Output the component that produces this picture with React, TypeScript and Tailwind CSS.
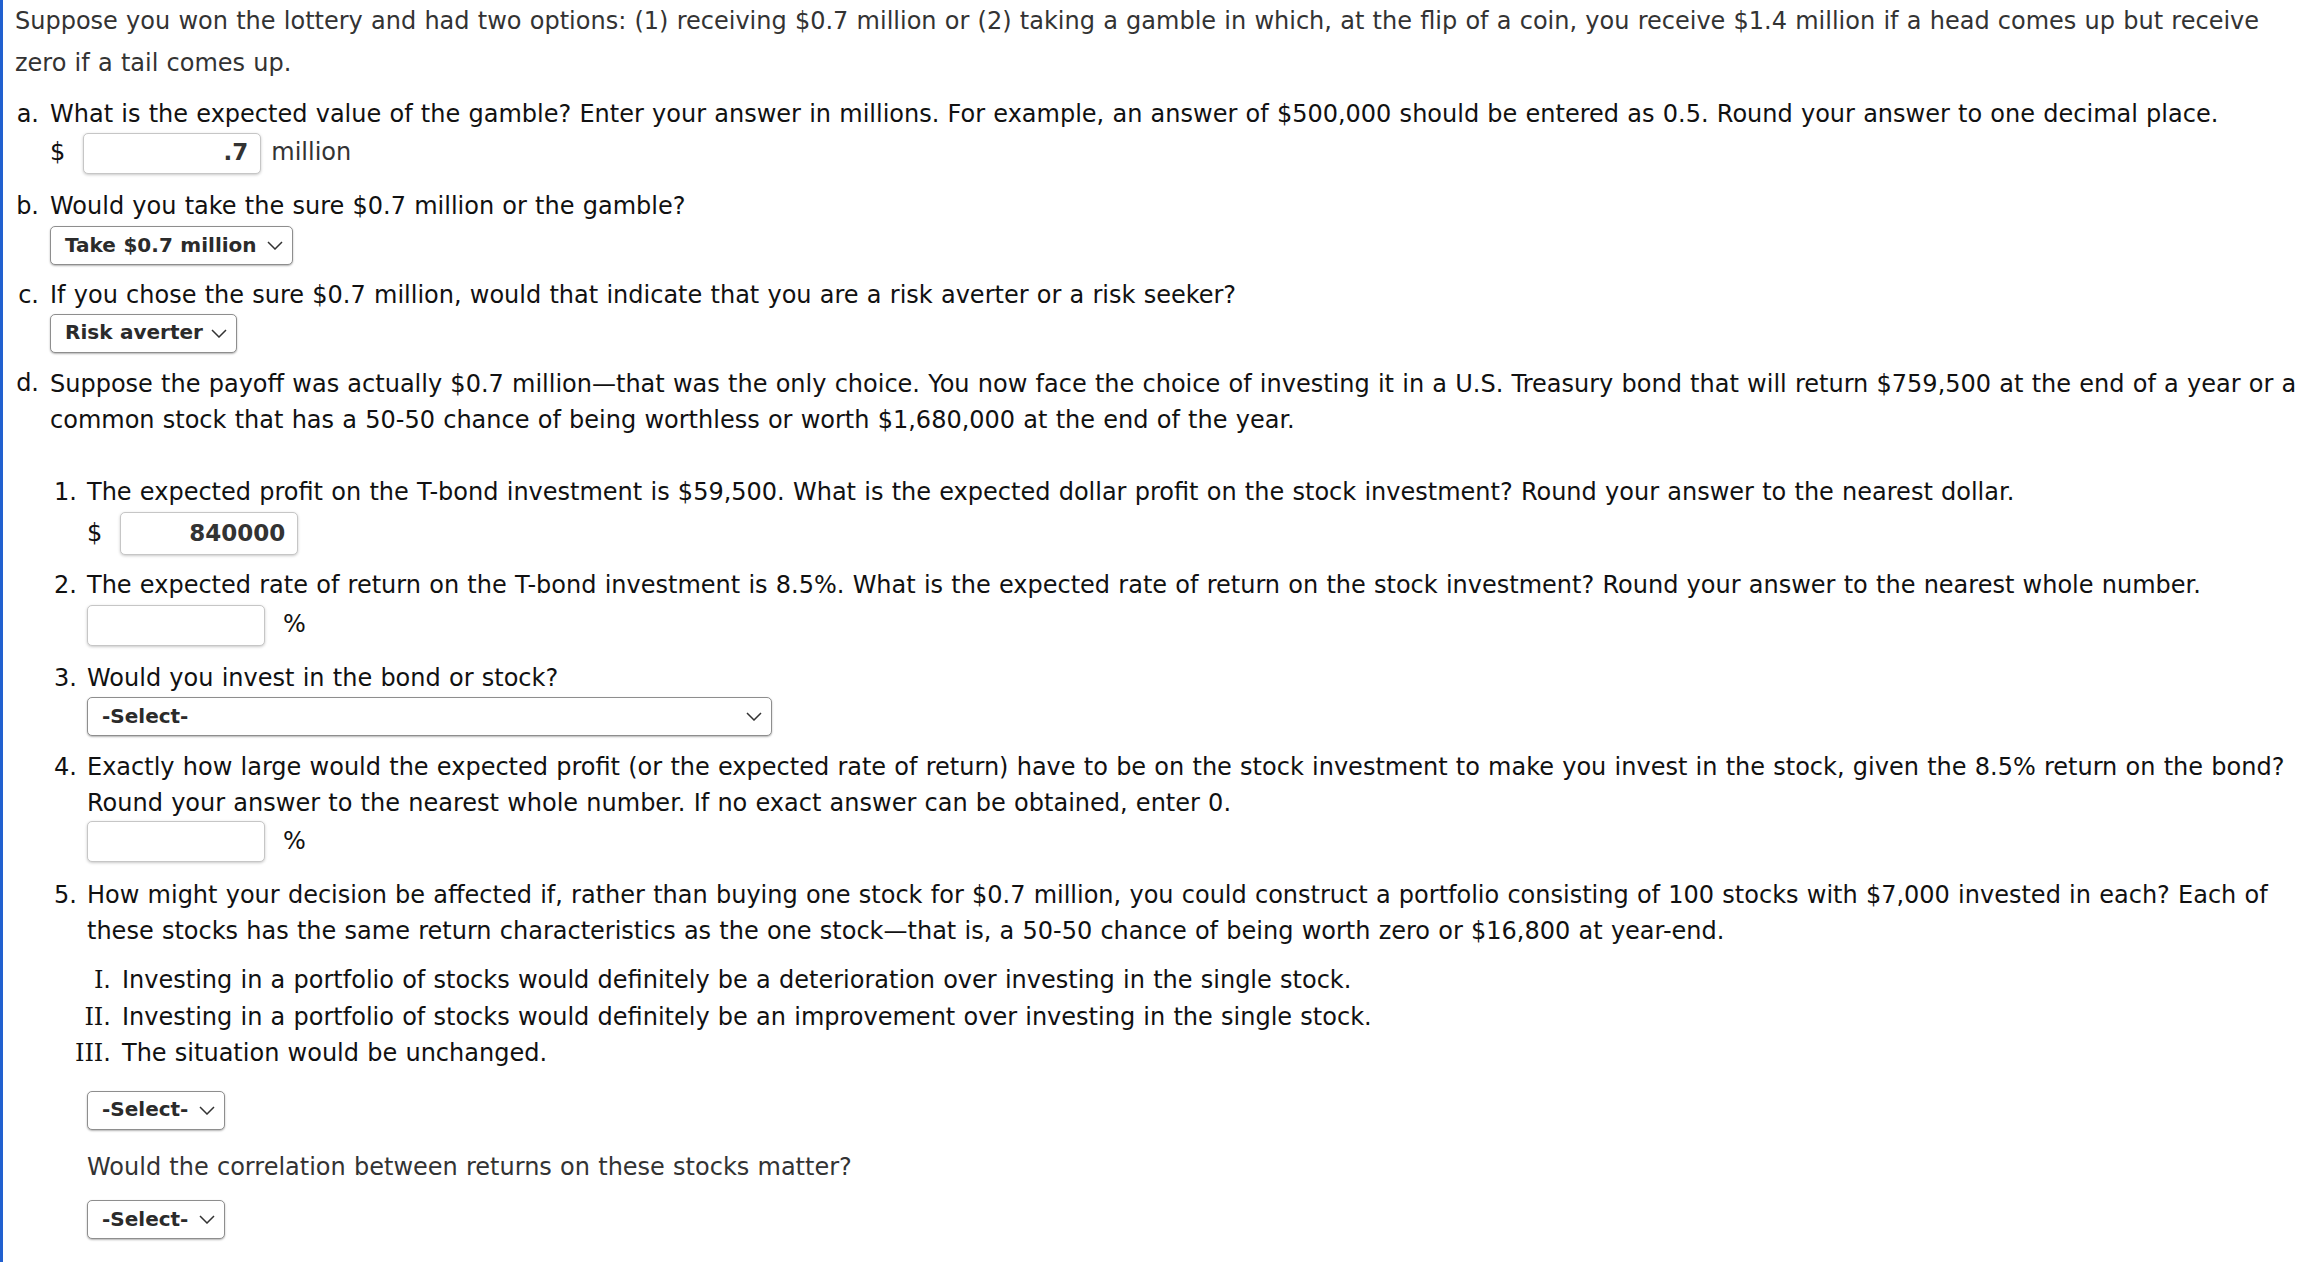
import React from "react"

function Chevron() {
  return (
    <svg width="16" height="9" viewBox="0 0 16 9" className="shrink-0">
      <polyline points="1,1 8,8 15,1" fill="none" stroke="#333" strokeWidth="1.5" />
    </svg>
  )
}

function Select({ label, w }: { label: string; w: string }) {
  return (
    <div
      className={`${w} flex h-[39px] items-center justify-between rounded-[5px] border-[1.5px] border-[#8e8e8e] bg-white pl-[14px] pr-[9px] text-[20px] font-bold text-[#2b2b2b] shadow-[0_1px_2px_rgba(0,0,0,0.3)]`}
    >
      <span>{label}</span>
      <Chevron />
    </div>
  )
}

function Field({ value, h = "h-[41px]" }: { value?: string; h?: string }) {
  return (
    <div
      className={`${h} flex w-[178px] items-center justify-end rounded-[5px] border border-[#c6c6c6] bg-white pr-[12px] text-[23px] font-bold text-[#333] shadow-[0_1px_3px_rgba(0,0,0,0.22)]`}
    >
      {value}
    </div>
  )
}

function Item({ mark, markW, pr, children, className = "" }: { mark: string; markW: string; pr: string; children: React.ReactNode; className?: string }) {
  return (
    <div className={`flex ${className}`}>
      <span className={`${markW} ${pr} shrink-0 text-right`}>{mark}</span>
      <div className="min-w-0 flex-1">{children}</div>
    </div>
  )
}

function Roman({ n, children }: { n: string; children: React.ReactNode }) {
  return (
    <div className="flex">
      <span className="flex w-[35px] shrink-0 justify-end whitespace-nowrap pr-[11px]">
        <span>
          <span className="font-['DejaVu_Serif',serif]">{n}</span>.
        </span>
      </span>
      <span>{children}</span>
    </div>
  )
}

export default function App() {
  return (
    <div className="min-h-screen border-l-[3px] border-[#2160cf] bg-white pl-[12px] font-['DejaVu_Sans',Verdana,sans-serif] text-[24px] text-[#111] [word-spacing:0.6px]">
      <p className="whitespace-nowrap leading-[42px] text-[#333]">
        Suppose you won the lottery and had two options: (1) receiving $0.7 million or (2) taking a gamble in which, at the flip of a coin, you receive $1.4 million if a head comes up but receive
        <br />
        zero if a tail comes up.
      </p>

      <div className="-ml-[12px] mt-[13px] whitespace-nowrap leading-[35.5px]">
        <Item mark="a." markW="w-[47px]" pr="pr-[11px]">
          <div>
            What is the expected value of the gamble? Enter your answer in millions. For example, an answer of $500,000 should be entered as 0.5. Round your answer to one decimal place.
          </div>
          <div className="flex items-center">
            <span>$</span>
            <div className="ml-[18px]">
              <Field value=".7" />
            </div>
            <span className="ml-[10px] text-[#333]">million</span>
          </div>
        </Item>

        <Item mark="b." markW="w-[47px]" pr="pr-[11px]" className="mt-[15px]">
          <div>Would you take the sure $0.7 million or the gamble?</div>
          <div className="mt-[2px]">
            <Select label="Take $0.7 million" w="w-[243px]" />
          </div>
        </Item>

        <Item mark="c." markW="w-[47px]" pr="pr-[11px]" className="mt-[13px]">
          <div>If you chose the sure $0.7 million, would that indicate that you are a risk averter or a risk seeker?</div>
          <div>
            <Select label="Risk averter" w="w-[187px]" />
          </div>
        </Item>

        <Item mark="d." markW="w-[47px]" pr="pr-[11px]" className="mt-[13px]">
          <div className="leading-[36.5px]">
            Suppose the payoff was actually $0.7 million—that was the only choice. You now face the choice of investing it in a U.S. Treasury bond that will return $759,500 at the end of a year or a
            <br />
            common stock that has a 50-50 chance of being worthless or worth $1,680,000 at the end of the year.
          </div>

          <div className="mt-[36px]">
            <Item mark="1." markW="w-[37px]" pr="pr-[10px]">
              <div>
                The expected profit on the T-bond investment is $59,500. What is the expected dollar profit on the stock investment? Round your answer to the nearest dollar.
              </div>
              <div className="mt-[2px] flex items-center">
                <span>$</span>
                <div className="ml-[18px]">
                  <Field value="840000" h="h-[43px]" />
                </div>
              </div>
            </Item>

            <Item mark="2." markW="w-[37px]" pr="pr-[10px]" className="mt-[13px]">
              <div>
                The expected rate of return on the T-bond investment is 8.5%. What is the expected rate of return on the stock investment? Round your answer to the nearest whole number.
              </div>
              <div className="mt-[1px] flex items-center">
                <Field />
                <span className="ml-[18px]">%</span>
              </div>
            </Item>

            <Item mark="3." markW="w-[37px]" pr="pr-[10px]" className="mt-[15px]">
              <div>Would you invest in the bond or stock?</div>
              <div className="mt-[1px]">
                <Select label="-Select-" w="w-[685px]" />
              </div>
            </Item>

            <Item mark="4." markW="w-[37px]" pr="pr-[10px]" className="mt-[14px]">
              <div>
                Exactly how large would the expected profit (or the expected rate of return) have to be on the stock investment to make you invest in the stock, given the 8.5% return on the bond?
                <br />
                Round your answer to the nearest whole number. If no exact answer can be obtained, enter 0.
              </div>
              <div className="flex items-center">
                <Field />
                <span className="ml-[18px]">%</span>
              </div>
            </Item>

            <Item mark="5." markW="w-[37px]" pr="pr-[10px]" className="mt-[16px]">
              <div>
                How might your decision be affected if, rather than buying one stock for $0.7 million, you could construct a portfolio consisting of 100 stocks with $7,000 invested in each? Each of
                <br />
                these stocks has the same return characteristics as the one stock—that is, a 50-50 chance of being worth zero or $16,800 at year-end.
              </div>
              <div className="mt-[13px] leading-[36.5px]">
                <Roman n="I">Investing in a portfolio of stocks would definitely be a deterioration over investing in the single stock.</Roman>
                <Roman n="II">Investing in a portfolio of stocks would definitely be an improvement over investing in the single stock.</Roman>
                <Roman n="III">The situation would be unchanged.</Roman>
              </div>
              <div className="mt-[19px]">
                <Select label="-Select-" w="w-[138px]" />
              </div>
              <div className="mt-[20px] text-[#333]">Would the correlation between returns on these stocks matter?</div>
              <div className="mt-[15px]">
                <Select label="-Select-" w="w-[138px]" />
              </div>
            </Item>
          </div>
        </Item>
      </div>
    </div>
  )
}
